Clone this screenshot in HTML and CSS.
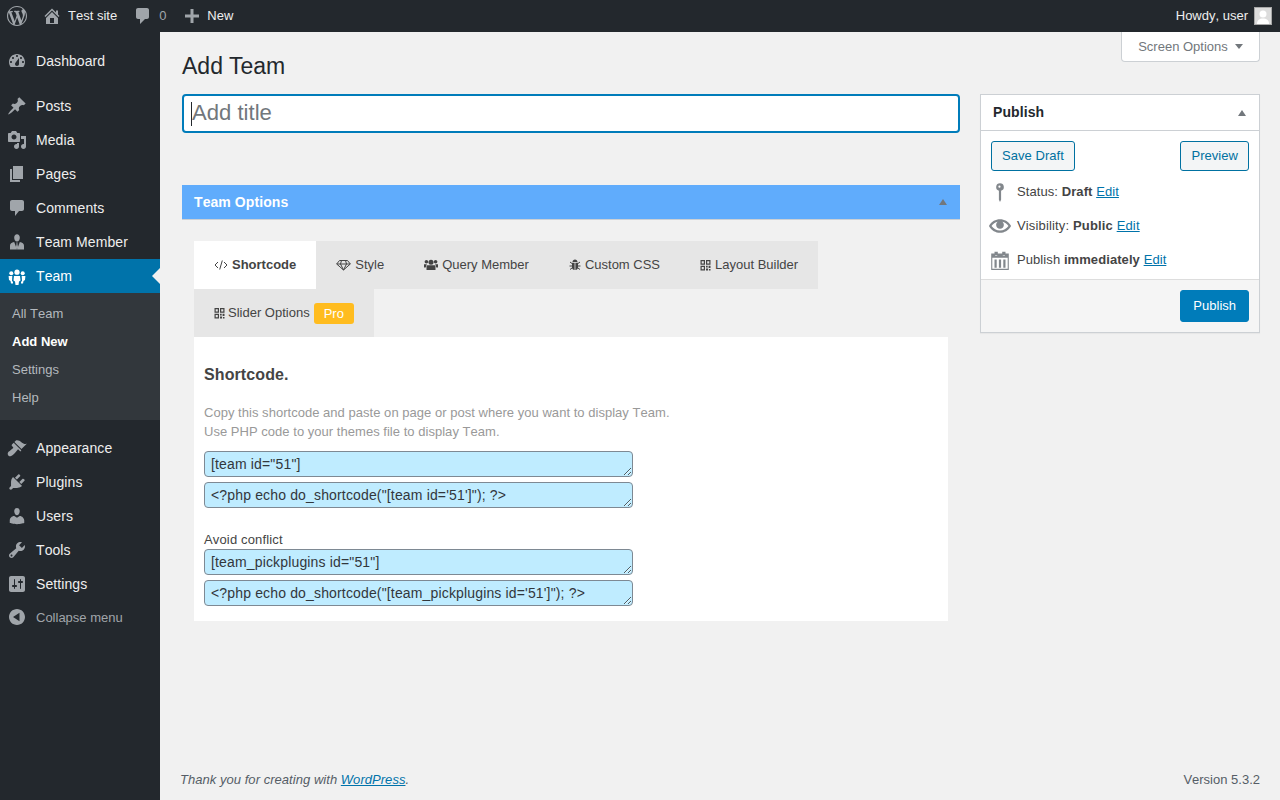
FILE: index.html
```html
<!DOCTYPE html>
<html>
<head>
    <meta charset="UTF-8">
    <meta name="viewport" content="width=device-width, initial-scale=1.0">
    <title>Add Team</title>
    <link rel="stylesheet" href="styles.css">
</head>
<body>
    <!-- top bar -->
    <div class="adminbar">
        <div class="bar-left">
            <svg class="bar-logo" viewBox="0 0 20 20"><path d="M20 10c0-5.51-4.49-10-10-10C4.48 0 0 4.49 0 10c0 5.52 4.48 10 10 10 5.51 0 10-4.48 10-10zM7.78 15.37L4.37 6.22c.55-.02 1.17-.08 1.17-.08.5-.06.44-1.13-.06-1.11 0 0-1.45.11-2.37.11-.18 0-.37 0-.58-.01C4.12 2.69 6.87 1.11 10 1.11c2.33 0 4.45.87 6.05 2.34-.68-.11-1.65.39-1.65 1.58 0 .74.45 1.36.9 2.1.35.61.55 1.36.55 2.46 0 1.49-1.4 5-1.4 5l-3.03-8.37c.54-.02.82-.17.82-.17.5-.05.44-1.25-.06-1.22 0 0-1.44.12-2.38.12-.87 0-2.33-.12-2.33-.12-.5-.03-.56 1.2-.06 1.22l.92.08 1.26 3.41zM17.41 10c.24-.64.74-1.87.43-4.25.7 1.29 1.05 2.71 1.05 4.25 0 3.29-1.73 6.24-4.4 7.78.97-2.59 1.94-5.2 2.92-7.78zM6.1 18.09C3.12 16.65 1.11 13.53 1.11 10c0-1.3.23-2.48.72-3.59C3.25 10.3 4.67 14.2 6.1 18.09zm4.03-6.63l2.58 6.98c-.86.29-1.76.45-2.71.45-.79 0-1.57-.11-2.29-.33.81-2.38 1.62-4.74 2.42-7.1z"/></svg>
            <span class="bar-item">
                <svg class="bar-icon" viewBox="0 0 20 20"><path d="M16 8.5l1.53 1.53-1.06 1.06L10 4.62l-6.47 6.47-1.06-1.06L10 2.5l4 4v-2h2v4zm-6-2.46l6 5.99V18H4v-5.97zM12 17v-5H8v5h4z"/></svg>
                Test site
            </span>
            <span class="bar-item bar-muted">
                <svg class="bar-icon" viewBox="0 0 20 20"><path d="M5 2h9c1.1 0 2 .9 2 2v7c0 1.1-.9 2-2 2h-2l-5 5v-5H5c-1.1 0-2-.9-2-2V4c0-1.1.9-2 2-2z"/></svg>
                0
            </span>
            <span class="bar-item bar-new">
                <svg class="bar-icon" viewBox="0 0 20 20"><path d="M17 8.5v3h-5.500V17h-3v-5.500H3v-3h5.500V3h3v5.500z"/></svg>
                New
            </span>
        </div>
        <div class="bar-right">
            Howdy, user
            <svg class="avatar" viewBox="0 0 18 18"><rect x=".5" y=".5" width="17" height="17" fill="#dcdcdc" stroke="#a8a8a8"/><circle cx="9" cy="7" r="3.500" fill="#fff"/><path d="M3 17c0-4 2.500-5.500 6-5.500s6 1.500 6 5.500z" fill="#fff"/></svg>
        </div>
    </div>

    <div class="layout">
        <!-- left menu -->
        <div class="sidebar">
            <ul class="menu menu-first">
                <li><svg viewBox="0 0 20 20"><path fill-rule="evenodd" d="M3.76 16h12.48c1.1-1.37 1.76-3.11 1.76-5 0-4.420-3.580-8-8-8s-8 3.580-8 8c0 1.890.660 3.630 1.760 5zM10 4c.550 0 1 .450 1 1s-.450 1-1 1-1-.450-1-1 .450-1 1-1zM6 6c.550 0 1 .450 1 1s-.450 1-1 1-1-.450-1-1 .450-1 1-1zm8 0c.550 0 1 .450 1 1s-.450 1-1 1-1-.450-1-1 .450-1 1-1zm-5.370 5.550L12 7v6c0 1.100-.900 2-2 2s-2-.900-2-2c0-.570.240-1.080.630-1.450zM4 10c.550 0 1 .450 1 1s-.450 1-1 1-1-.450-1-1 .450-1 1-1zm12 0c.550 0 1 .450 1 1s-.450 1-1 1-1-.450-1-1 .450-1 1-1z"/></svg>Dashboard</li>
            </ul>
            <ul class="menu">
                <li><svg viewBox="0 0 20 20"><path d="M10.440 3.020l1.820-1.820 6.360 6.350-1.830 1.820c-1.050-.680-2.480-.570-3.410.360l-.750.750c-.920.930-1.040 2.350-.350 3.410l-1.830 1.820-2.410-2.410-2.800 2.790c-.420.420-3.380 2.710-3.800 2.290s1.860-3.390 2.280-3.810l2.790-2.790L4.100 9.360l1.830-1.820c1.050.690 2.480.570 3.400-.360l.750-.750c.930-.920 1.050-2.350.360-3.410z"/></svg>Posts</li>
                <li><svg viewBox="0 0 20 20"><path fill-rule="evenodd" d="M13 11V4c0-.550-.450-1-1-1h-1.670L9 1H5L3.670 3H2c-.550 0-1 .450-1 1v7c0 .550.450 1 1 1h10c.550 0 1-.450 1-1zM7 4.500c1.380 0 2.500 1.120 2.500 2.500S8.380 9.500 7 9.500 4.500 8.380 4.500 7 5.620 4.500 7 4.500zM14 6h5v10.500c0 1.380-1.120 2.500-2.500 2.500S14 17.880 14 16.500s1.120-2.500 2.500-2.500c.170 0 .340.020.500.050V9h-3V6zm-4 8.050V13h2v3.500c0 1.380-1.120 2.500-2.500 2.500S7 17.880 7 16.500 8.120 14 9.500 14c.170 0 .340.020.500.050z"/></svg>Media</li>
                <li><svg viewBox="0 0 20 20"><path d="M6 15V2h10v13H6zm-1 1h8v2H3V5h2v11z"/></svg>Pages</li>
                <li><svg viewBox="0 0 20 20"><path d="M5 2h10c1.100 0 2 .900 2 2v7c0 1.100-.900 2-2 2h-3l-4 5v-5H5c-1.100 0-2-.900-2-2V4c0-1.100.900-2 2-2z"/></svg>Comments</li>
                <li><svg viewBox="0 0 20 20"><path fill-rule="evenodd" d="M10 9.500c-2 0-2.800-2.200-2.800-4C7.200 3.600 8.300 2.200 10 2.200s2.800 1.400 2.800 3.300c0 1.800-.800 4-2.800 4zM3 17.500v-3.800c0-2 1.600-3.300 4.200-3.700L10 17.500 12.800 10c2.600.400 4.200 1.700 4.200 3.700v3.800zM9.300 10.500h1.400l-.300 1.200.600 3.300-1 2-1-2 .600-3.300z"/></svg>Team Member</li>
                <li class="current"><svg viewBox="0 0 20 20"><circle cx="10" cy="6.200" r="2.600"/><circle cx="4.300" cy="7.200" r="2"/><circle cx="15.700" cy="7.200" r="2"/><path d="M7 10h6l.500 4.500-1.500 1-.500 3.500h-3L8 15.500l-1.500-1zM1.600 10h3.700L5 14.700l1 1.300v1.500H4L3.500 15l-1.500-1zM18.400 10h-3.700l.300 4.700-1 1.300v1.500h2l.500-2.500 1.500-1z"/></svg>Team<span class="current-arrow"></span></li>
            </ul>
            <ul class="submenu">
                <li>All Team</li>
                <li class="sub-active">Add New</li>
                <li>Settings</li>
                <li>Help</li>
            </ul>
            <ul class="menu menu-after">
                <li><svg viewBox="0 0 20 20"><path d="M14.480 11.060L7.410 3.990l1.500-1.500c.500-.560 2.300-.470 3.510.320 1.210.800 1.430 1.280 2.910 2.100 1.180.640 2.450 1.260 4.450.850zm-.710.710L6.700 4.700 4.930 6.470c-.390.390-.390 1.020 0 1.410l1.060 1.060c.390.390.390 1.030 0 1.420-.600.600-1.430 1.110-2.210 1.690-.350.260-.700.530-1.010.840C1.430 13.230 0 15 1 17c.500 1 1.500 1.500 2.500 1.200 1.500-.400 3.200-1.800 4.400-3.100l.850-1.020c.570-.780 1.090-1.600 1.680-2.200.390-.380 1.020-.380 1.410 0l1.060 1.070c.390.390 1.030.390 1.420 0z"/></svg>Appearance</li>
                <li><svg viewBox="0 0 20 20"><path d="M13.110 4.360L9.870 7.600 8 5.730l3.240-3.240c.350-.340 1.050-.200 1.560.320.520.510.660 1.210.310 1.550zm-8 1.770l.910-1.120 9.010 9.010-1.190.840c-.710.710-2.630 1.160-3.820 1.160H6.140L4.900 17.260c-.590.590-1.540.590-2.120 0-.590-.580-.590-1.530 0-2.120l1.240-1.240v-3.880c0-1.130.400-3.190 1.090-3.890zm7.260 3.970l3.240-3.240c.340-.350 1.040-.210 1.550.310.520.510.660 1.210.310 1.550l-3.240 3.250z"/></svg>Plugins</li>
                <li><svg viewBox="0 0 20 20"><path d="M10 9.250c-2.270 0-2.730-3.440-2.730-3.440C7 4.020 7.820 2 9.970 2c2.160 0 2.980 2.020 2.710 3.810 0 0-.410 3.440-2.680 3.440zm0 2.570L12.720 10c2.390 0 4.520 2.330 4.520 4.530v2.490s-3.650 1.130-7.240 1.130c-3.650 0-7.240-1.130-7.240-1.130v-2.490c0-2.250 1.940-4.480 4.470-4.480z"/></svg>Users</li>
                <li><svg viewBox="0 0 20 20"><path fill-rule="evenodd" d="M16.680 9.770c-1.340 1.340-3.300 1.670-4.950.990l-5.410 6.520c-.990.990-2.590.990-3.580 0s-.990-2.590 0-3.570l6.520-5.420c-.680-1.650-.350-3.610.990-4.950 1.280-1.280 3.120-1.620 4.720-1.060l-2.890 2.890 2.820 2.820 2.860-2.870c.530 1.580.180 3.390-1.080 4.670zM3.810 16.210c.400.390 1.040.390 1.430 0 .400-.400.400-1.040 0-1.430-.390-.400-1.030-.400-1.430 0-.390.390-.390 1.030 0 1.430z"/></svg>Tools</li>
                <li><svg viewBox="0 0 20 20"><path fill-rule="evenodd" d="M18 16V4c0-1.100-.900-2-2-2H4c-1.100 0-2 .900-2 2v12c0 1.100.900 2 2 2h12c1.100 0 2-.900 2-2zM8 11h1c.550 0 1 .450 1 1s-.450 1-1 1H8v1.500c0 .280-.220.500-.500.500s-.500-.220-.500-.500V13H6c-.550 0-1-.450-1-1s.450-1 1-1h1V5.500c0-.280.220-.500.500-.500s.500.220.500.500V11zm5-2h-1c-.550 0-1-.450-1-1s.450-1 1-1h1V5.500c0-.280.220-.500.500-.500s.500.220.500.500V7h1c.550 0 1 .450 1 1s-.450 1-1 1h-1v5.500c0 .280-.220.500-.500.500s-.500-.220-.500-.500V9z"/></svg>Settings</li>
                <li class="collapse"><svg viewBox="0 0 20 20"><path fill-rule="evenodd" d="M18 10c0-4.420-3.580-8-8-8s-8 3.580-8 8 3.580 8 8 8 8-3.580 8-8zm-5.500-4.200v8.400L6 10z"/></svg>Collapse menu</li>
            </ul>
        </div>

        <div class="content">
            <div class="screen-options">Screen Options<span class="arrow-down"></span></div>
            <h1>Add Team</h1>

            <div class="post-body">
                <div class="main-col">
                    <div class="title-input"><span class="caret"></span>Add title</div>

                    <div class="options-head">
                        <span>Team Options</span>
                        <span class="arrow-up"></span>
                    </div>

                    <div class="options-body">
                        <div class="tabs">
                            <div class="tab active">
                                <svg class="tab-icon icon-code" viewBox="0 0 14 12"><path class="stroke" d="M4 3L1 6l3 3M10 3l3 3-3 3M8.300 1.500l-2.600 9"/></svg>Shortcode
                            </div>
                            <div class="tab">
                                <svg class="tab-icon icon-gem" viewBox="0 0 15 12"><path class="stroke" d="M3.500 1.500h8L14.300 5 7.500 11 .7 5zM.7 5h13.600M5.500 1.500L4.500 5l3 6 3-6-1-3.500"/></svg>Style
                            </div>
                            <div class="tab">
                                <svg class="tab-icon icon-users" viewBox="0 0 14 12"><circle cx="7" cy="3.200" r="2.500"/><circle cx="2.400" cy="2.800" r="1.800"/><circle cx="11.600" cy="2.800" r="1.800"/><path d="M3.800 6.200h6.400c.800 0 1.300.700 1.300 1.500v3.300h-9V7.700c0-.800.500-1.500 1.300-1.500zM0 5.200h2.800L1.700 8.500H0zM14 5.200h-2.800l1.100 3.300H14z"/></svg>Query Member
                            </div>
                            <div class="tab">
                                <svg class="tab-icon icon-bug" viewBox="0 0 12 12"><path d="M3.500 3c0-1.400 1.100-2.500 2.500-2.500S8.500 1.600 8.500 3zM3 3.800h2.600V11C4 11 3 10 3 8.500zM9 3.800H6.400V11C8 11 9 10 9 8.500z"/><path class="stroke" d="M3 4.500L1 3M9 4.500l2-1.500M3 7H.5M9 7h2.500M3 9l-2 1.500M9 9l2 1.500"/></svg>Custom CSS
                            </div>
                            <div class="tab">
                                <svg class="tab-icon icon-qr" viewBox="0 0 11 12"><path fill-rule="evenodd" d="M.5 1h4.500v4.800H.5zm1.200 1.200v2.400h2.100V2.200zM6 1h4.500v4.800H6zm1.200 1.200v2.400h2.100V2.200zM.5 6.800H5v4.700H.5zm1.200 1.200v2.300h2.100V8zM6 6.800h1.700v1.700H6zM8.600 6.800h1.900v2.200H8.600zM6 9.600h2.100v1.900H6zM9 10h1.500v1.500H9z"/></svg>Layout Builder
                            </div>
                            <div class="tab">
                                <svg class="tab-icon icon-qr icon-slider" viewBox="0 0 11 12"><path fill-rule="evenodd" d="M.5 1h4.500v4.800H.5zm1.200 1.200v2.400h2.100V2.200zM6 1h4.500v4.800H6zm1.200 1.200v2.400h2.100V2.200zM.5 6.800H5v4.700H.5zm1.200 1.200v2.300h2.100V8zM6 6.800h1.700v1.700H6zM8.600 6.800h1.900v2.200H8.600zM6 9.600h2.100v1.900H6zM9 10h1.500v1.500H9z"/></svg>Slider Options<span class="pro">Pro</span>
                            </div>
                        </div>

                        <div class="panel">
                            <div class="panel-title">Shortcode.</div>
                            <p class="panel-desc">Copy this shortcode and paste on page or post where you want to display Team.<br>Use PHP code to your themes file to display Team.</p>
                            <div class="code-group">
                                <textarea class="code">[team id="51"]</textarea>
                                <textarea class="code">&lt;?php echo do_shortcode("[team id='51']"); ?&gt;</textarea>
                            </div>
                            <div class="conflict-label">Avoid conflict</div>
                            <div class="code-group">
                                <textarea class="code">[team_pickplugins id="51"]</textarea>
                                <textarea class="code">&lt;?php echo do_shortcode("[team_pickplugins id='51']"); ?&gt;</textarea>
                            </div>
                        </div>
                    </div>
                </div>

                <div class="publish-box">
                    <div class="publish-head">
                        <span>Publish</span>
                        <span class="arrow-up"></span>
                    </div>
                    <div class="publish-actions">
                        <span class="btn">Save Draft</span>
                        <span class="btn">Preview</span>
                    </div>
                    <div class="publish-row">
                        <svg viewBox="0 0 20 20"><path d="M10 2a3.500 3.500 0 0 1 1 6.850V17l-1 2-1-2V8.850A3.500 3.500 0 0 1 10 2zm-.500 2.200a1 1 0 1 0 0 2 1 1 0 0 0 0-2z" fill-rule="evenodd"/></svg>
                        <span class="row-status">Status: <b>Draft</b> <a href="#">Edit</a></span>
                    </div>
                    <div class="publish-row">
                        <svg viewBox="0 0 20 20"><path d="M19.700 9.400C17.700 6 14 3.900 10 3.900S2.300 6 .3 9.400L0 10l.3.600c2 3.400 5.700 5.500 9.700 5.500s7.700-2.100 9.700-5.500l.3-.6-.3-.6zM10 14.100c-3.100 0-6-1.600-7.700-4.100C3.600 8 5.700 6.600 8 6.100c-.900.600-1.500 1.700-1.500 2.900 0 1.900 1.600 3.500 3.500 3.500s3.500-1.600 3.500-3.500c0-1.200-.600-2.300-1.500-2.900 2.300.500 4.400 1.900 5.700 3.900-1.700 2.500-4.600 4.100-7.700 4.100z"/></svg>
                        <span class="row-visibility">Visibility: <b>Public</b> <a href="#">Edit</a></span>
                    </div>
                    <div class="publish-row">
                        <svg viewBox="0 0 20 20"><path fill-rule="evenodd" d="M15 4h3v15H2V4h3V2.500h1.500V5.500h-1V6h2v-.500h-1V2.500H8V4h4V2.500h1.500V5.500h-1V6h2v-.500h-1V2.500H15zM3 8v10h14V8zm2 1.500h2V17H5zm4 0h2V17H9zm4 0h2V17h-2z"/></svg>
                        <span class="row-status">Publish <b>immediately</b> <a href="#">Edit</a></span>
                    </div>
                    <div class="publish-foot">
                        <span class="btn-primary">Publish</span>
                    </div>
                </div>
            </div>

            <div class="footer">
                <span class="thanks">Thank you for creating with <a href="#">WordPress</a>.</span>
                <span>Version 5.3.2</span>
            </div>
        </div>
    </div>
</body>
</html>
```

FILE: styles.css
```css
html, body {
    margin: 0;
    padding: 0;
}

body {
    background: #f1f1f1;
    color: #444;
    font-family: "Liberation Sans", Arial, sans-serif;
    font-size: 13px;
    font-kerning: none;
    line-height: 1.4;
    height: 800px;
    overflow: hidden;
}

a {
    color: #0073aa;
}

ul {
    list-style: none;
    margin: 0;
    padding: 0;
}

/* top bar */
.adminbar {
    height: 32px;
    background: #23282d;
    color: #eee;
    display: flex;
    justify-content: space-between;
    align-items: center;
    padding: 0 8px 0 7px;
}

.bar-left {
    display: flex;
    align-items: center;
}

.bar-logo {
    width: 20px;
    height: 20px;
    fill: #a0a5aa;
    margin-right: 15px;
}

.bar-item {
    display: flex;
    align-items: center;
    margin-right: 16px;
}

.bar-icon {
    width: 20px;
    height: 20px;
    fill: #a0a5aa;
    margin-right: 6px;
}

.bar-new .bar-icon {
    margin-right: 5px;
}

.bar-muted {
    color: #a0a5aa;
}

.bar-right {
    display: flex;
    align-items: center;
}

.avatar {
    width: 18px;
    height: 18px;
    margin-left: 6px;
}

.layout {
    display: flex;
    height: 768px;
}

/* left menu */
.sidebar {
    width: 160px;
    flex-shrink: 0;
    background: #23282d;
    padding-top: 12px;
    box-sizing: border-box;
}

.menu li {
    position: relative;
    height: 34px;
    box-sizing: border-box;
    display: flex;
    align-items: center;
    padding: 2px 0 0 7px;
    font-size: 14px;
    letter-spacing: 0.08px;
    color: #eee;
}

.menu svg {
    width: 20px;
    height: 20px;
    fill: #a0a5aa;
    margin: 0 9px 2px 0;
    flex-shrink: 0;
}

.menu-first {
    margin-bottom: 11px;
}

.menu li.current {
    background: #0073aa;
    color: #fff;
}

.menu li.current svg {
    fill: #fff;
}

.current-arrow {
    position: absolute;
    right: 0;
    top: 9px;
    border: 8px solid transparent;
    border-right-color: #f1f1f1;
    border-left: 0;
}

.submenu {
    background: #32373c;
    padding: 6px 0 9px;
}

.submenu li {
    height: 28px;
    line-height: 30px;
    padding-left: 12px;
    color: #b4b9be;
}

.submenu li.sub-active {
    color: #fff;
    font-weight: bold;
}

.menu-after {
    margin-top: 11px;
}

.menu li.collapse {
    height: 32px;
    font-size: 13px;
    letter-spacing: 0;
    color: #a0a5aa;
}

/* content */
.content {
    position: relative;
    flex: 1;
    padding: 0 20px 0 22px;
    display: flex;
    flex-direction: column;
}

.screen-options {
    position: absolute;
    top: 0;
    right: 20px;
    width: 139px;
    height: 30px;
    box-sizing: border-box;
    background: #fff;
    border: 1px solid #ccd0d4;
    border-top: 0;
    border-radius: 0 0 4px 4px;
    color: #72777c;
    text-align: center;
    line-height: 29px;
}

.arrow-down {
    display: inline-block;
    margin-left: 7px;
    vertical-align: 2px;
    border: 4.500px solid transparent;
    border-top: 5px solid #72777c;
    border-bottom: 0;
}

.arrow-up {
    display: inline-block;
    border: 4.500px solid transparent;
    border-bottom: 6px solid #72777c;
    border-top: 0;
}

h1 {
    margin: 0;
    padding: 19px 0 13px;
    font-size: 23px;
    font-kerning: normal;
    font-weight: 400;
    line-height: 30px;
    color: #23282d;
}

.post-body {
    display: grid;
    grid-template-columns: 1fr 280px;
    gap: 20px;
    align-items: start;
}

/* title field */
.title-input {
    height: 39px;
    box-sizing: border-box;
    background: #fff;
    border: 2px solid #007cba;
    border-radius: 4px;
    padding: 0 7px;
    display: flex;
    align-items: center;
    font-size: 22.100px;
    color: #72777c;
    margin-bottom: 52px;
}

.caret {
    width: 1px;
    height: 24px;
    background: #23282d;
}

/* team options */
.options-head {
    height: 35px;
    box-sizing: border-box;
    background: #60acfc;
    border-bottom: 1px solid #ccd0d4;
    color: #fff;
    font-size: 14px;
    font-weight: bold;
    letter-spacing: 0.08px;
    display: flex;
    justify-content: space-between;
    align-items: center;
    padding: 2px 13px 0 12px;
}

.options-head .arrow-up {
    margin-bottom: 2px;
}

.options-body {
    padding: 21px 12px 0;
}

.tabs {
    display: flex;
    flex-wrap: wrap;
}

.tab {
    height: 48px;
    display: flex;
    align-items: center;
    padding: 0 20px;
    background: #e6e6e6;
    color: #444;
}

.tab.active {
    background: #fff;
    font-weight: bold;
}

.tab-icon {
    height: 12px;
    fill: #444;
    margin-right: 4px;
    flex-shrink: 0;
}

.icon-code,
.icon-users {
    width: 14px;
}

.icon-gem {
    width: 15px;
}

.icon-bug {
    width: 12px;
}

.icon-qr {
    width: 11px;
}

.icon-slider {
    margin-right: 3px;
}

.stroke {
    fill: none;
    stroke: #444;
    stroke-width: 1;
}

.pro {
    background: #ffbc1f;
    color: #fff;
    border-radius: 3px;
    padding: 0 10px;
    height: 21px;
    line-height: 21px;
    margin-left: 4px;
}

.panel {
    background: #fff;
    padding: 27px 10px 15px;
}

.panel-title {
    font-size: 16px;
    font-weight: bold;
    letter-spacing: 0.1px;
    line-height: 22px;
}

.panel-desc {
    margin: 17px 0 10px;
    color: #999;
    letter-spacing: 0.03px;
    line-height: 19px;
}

.code-group {
    display: flex;
    flex-direction: column;
    gap: 5px;
}

.code {
    display: block;
    width: 429px;
    height: 26px;
    box-sizing: border-box;
    margin: 0;
    padding: 2px 6px;
    background: #bfecff;
    border: 1px solid #7e8993;
    border-radius: 4px;
    color: #32373c;
    font-family: "Liberation Sans", Arial, sans-serif;
    font-size: 14px;
    font-kerning: none;
    letter-spacing: 0.155px;
    line-height: 20px;
    overflow: hidden;
}

.conflict-label {
    margin-top: 22px;
    letter-spacing: 0.15px;
    line-height: 19px;
}

/* publish box */
.publish-box {
    background: #fff;
    border: 1px solid #ccd0d4;
    box-shadow: 0 1px 1px rgba(0,0,0,0.04);
}

.publish-head {
    height: 35px;
    border-bottom: 1px solid #ccd0d4;
    display: flex;
    justify-content: space-between;
    align-items: center;
    padding: 0 13px 0 12px;
    font-size: 14px;
    font-weight: bold;
    letter-spacing: 0.1px;
    color: #23282d;
}

.publish-actions {
    display: flex;
    justify-content: space-between;
    padding: 10px 10px 4px;
}

.btn {
    height: 30px;
    box-sizing: border-box;
    line-height: 28px;
    padding: 0 10px;
    background: #f3f5f6;
    border: 1px solid #0071a1;
    border-radius: 3px;
    color: #0071a1;
    letter-spacing: 0.05px;
}

.publish-row {
    height: 34px;
    display: flex;
    align-items: center;
    padding-left: 8px;
}

.publish-row svg {
    width: 22px;
    height: 22px;
    fill: #82878c;
    margin-right: 6px;
    flex-shrink: 0;
}

.row-status {
    letter-spacing: 0.08px;
}

.row-visibility {
    letter-spacing: 0.15px;
}

.publish-foot {
    margin-top: 2px;
    border-top: 1px solid #ddd;
    background: #f5f5f5;
    padding: 10px;
    display: flex;
    justify-content: flex-end;
}

.btn-primary {
    height: 32px;
    box-sizing: border-box;
    line-height: 30px;
    padding: 0 12px;
    background: #007cba;
    border: 1px solid #007cba;
    border-radius: 3px;
    color: #fff;
}

/* footer */
.footer {
    margin-top: auto;
    margin-left: -2px;
    height: 40px;
    display: flex;
    justify-content: space-between;
    align-items: center;
    color: #555d66;
}

.thanks {
    font-style: italic;
    letter-spacing: 0.04px;
}
```
